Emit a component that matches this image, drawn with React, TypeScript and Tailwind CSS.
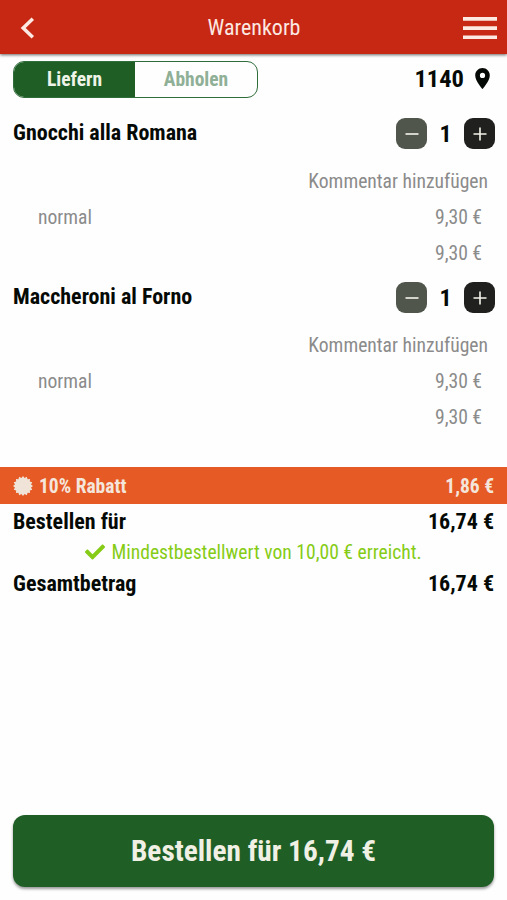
import { FaCheck } from "react-icons/fa";
import { MdLocationOn } from "react-icons/md";

type CartItem = {
  name: string;
  amount: number;
  variant: string;
  price: string;
  total: string;
};

const items: CartItem[] = [
  { name: "Gnocchi alla Romana", amount: 1, variant: "normal", price: "9,30 €", total: "9,30 €" },
  { name: "Maccheroni al Forno", amount: 1, variant: "normal", price: "9,30 €", total: "9,30 €" },
];

export default function App() {
  return (
    <div className="flex h-[900px] w-[507px] flex-col overflow-hidden bg-[#fefefe] font-['Roboto_Condensed','Roboto',sans-serif] text-[#060a06] [font-stretch:75%]">
      <Header />
      <div className="flex h-[50px] shrink-0 items-center justify-between pr-[12px] pl-[13px]">
        <DeliverySwitch />
        <div className="flex items-center text-[24.5px] leading-none font-bold">
          <span>1140</span>
          <MdLocationOn className="ml-[6px] size-[25px] -translate-y-px" />
        </div>
      </div>
      <div className="h-[363px] shrink-0">
        {items.map((item) => (
          <CartRow key={item.name} item={item} />
        ))}
      </div>
      <div className="flex h-[37px] shrink-0 items-center justify-between bg-[#e65a26] px-[13px] text-[19.5px] font-bold text-[#f5e6dc]">
        <span className="flex items-center gap-[6px]">
          <DiscountBadge />
          <span className="pt-[2px]">10% Rabatt</span>
        </span>
        <span className="pt-[2px]">1,86 €</span>
      </div>
      <SumRow label="Bestellen für" value="16,74 €" />
      <div className="flex h-[28px] shrink-0 items-center justify-center gap-[6px] text-[19.6px] text-[#86cc16]">
        <FaCheck className="size-[20px]" />
        <span className="pt-[2px]">Mindestbestellwert von 10,00 € erreicht.</span>
      </div>
      <SumRow label="Gesamtbetrag" value="16,74 €" />
      <button className="mx-[13px] mt-auto mb-[13px] h-[72px] shrink-0 rounded-[12px] bg-[#1f5f26] pt-[1px] text-[29.3px] font-bold text-[#f0f0e4] shadow-[0_2px_3px_rgba(0,0,0,0.4)]">
        Bestellen für 16,74 €
      </button>
    </div>
  );
}

function Header() {
  return (
    <header className="flex h-[54px] shrink-0 items-center justify-between bg-[#c72814] pr-[10px] pl-[20px] text-[#fbe9e2] shadow-[0_1px_3px_rgba(0,0,0,0.6)]">
      <svg viewBox="0 0 15 22" className="mt-[2px] h-[22px] w-[15px]">
        <path d="M12.8 1.7 3.2 11l9.6 9.3" fill="none" stroke="currentColor" strokeWidth="3.5" />
      </svg>
      <h1 className="ml-[10px] text-[22px]">Warenkorb</h1>
      <svg viewBox="0 0 34 24" className="mt-[2px] h-[24px] w-[34px]" fill="currentColor">
        <path d="M0 1h34v3.7H0zM0 10.2h34v3.7H0zM0 19.4h34v3.7H0z" />
      </svg>
    </header>
  );
}

function DeliverySwitch() {
  return (
    <div className="flex h-[37px] w-[245px] overflow-hidden rounded-[11px] border border-[#2f6d3b] text-[19.5px] font-bold">
      <button className="w-[121px] bg-[#1f5f26] pt-[2px] text-[#f0f4e8]">Liefern</button>
      <button className="flex-1 pt-[2px] text-[#8fb096]">Abholen</button>
    </div>
  );
}

function CartRow({ item }: { item: CartItem }) {
  return (
    <section className="h-[164px]">
      <div className="flex h-[59px] items-center justify-between pr-[12px] pl-[13px]">
        <h2 className="pb-[2px] text-[22px] font-bold">{item.name}</h2>
        <div className="flex items-center">
          <AmountButton sign="minus" />
          <span className="w-[37px] text-center text-[24px] leading-none font-bold">{item.amount}</span>
          <AmountButton sign="plus" />
        </div>
      </div>
      <div className="pt-px text-[19.6px] text-[#8b8b8b]">
        <p className="flex h-[36px] items-center justify-end pr-[19px]">Kommentar hinzufügen</p>
        <p className="flex h-[36px] items-center justify-between pr-[25px] pl-[38px]">
          <span>{item.variant}</span>
          <span>{item.price}</span>
        </p>
        <p className="flex h-[36px] items-center justify-end pr-[25px]">{item.total}</p>
      </div>
    </section>
  );
}

function AmountButton({ sign }: { sign: "minus" | "plus" }) {
  return (
    <button
      className={`flex size-[31px] items-center justify-center rounded-[9px] text-[#f4f4ec] ${
        sign === "minus" ? "bg-[#50564b]" : "bg-[#20211f]"
      }`}
    >
      <svg viewBox="0 0 14 14" className="size-[14px]" fill="none" stroke="currentColor" strokeWidth="1.6">
        <path d={sign === "minus" ? "M.5 7h13" : "M.5 7h13M7 .5v13"} />
      </svg>
    </button>
  );
}

function SumRow({ label, value }: { label: string; value: string }) {
  return (
    <div className="flex h-[34px] shrink-0 items-center justify-between px-[13px] text-[22px] font-bold">
      <span>{label}</span>
      <span>{value}</span>
    </div>
  );
}

// Scalloped seal with 16 points
function DiscountBadge() {
  const points = Array.from({ length: 32 }, (_, i) => {
    const r = i % 2 ? 8.2 : 10;
    const a = (i * Math.PI) / 16;
    return `${(10 + r * Math.sin(a)).toFixed(2)},${(10 - r * Math.cos(a)).toFixed(2)}`;
  }).join(" ");
  return (
    <svg viewBox="0 0 20 20" className="size-[20px]" fill="#f0e4d8">
      <polygon points={points} />
    </svg>
  );
}
